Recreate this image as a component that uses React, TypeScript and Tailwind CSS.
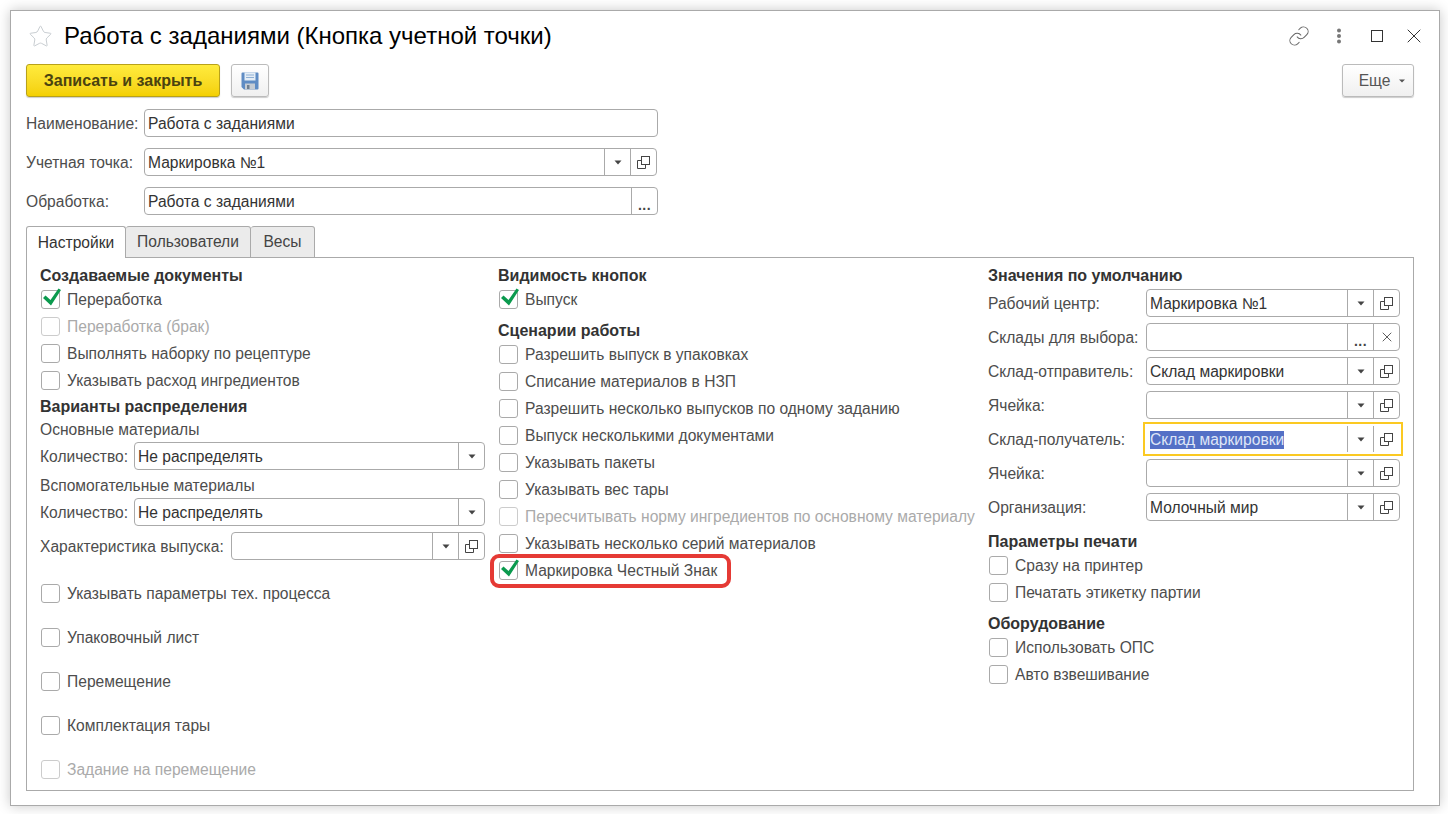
import { Link, Star, X } from "lucide-react";
import type { ReactNode } from "react";

function Caret() {
  return (
    <svg width="8" height="5" viewBox="0 0 8 5" className="text-[#444]">
      <path d="M0.5 0.5h7L4 4.5z" fill="currentColor" />
    </svg>
  );
}

function CopyIcon() {
  return (
    <svg width="13" height="13" viewBox="0 0 13 13" fill="none" stroke="#444" strokeWidth="1">
      <rect x="4.5" y="0.5" width="8" height="8" />
      <path d="M4.5 4.5H0.5v8h8V8.5" />
    </svg>
  );
}

function Cell({ children }: { children: ReactNode }) {
  return <div className="flex h-full w-[26px] shrink-0 items-center justify-center border-l border-[#aaa]">{children}</div>;
}

function Dots() {
  return <span className="mt-[8px] text-[14px] font-bold leading-none tracking-[0.5px] text-[#444]">...</span>;
}

type FieldProps = {
  value?: string;
  width: string;
  kind?: "select" | "open" | "clear" | "plain" | "pick";
  focused?: boolean;
};

function Field({ value = "", width, kind = "select", focused }: FieldProps) {
  return (
    <div
      className={`flex h-[28px] shrink-0 items-stretch border bg-white ${width} ${
        focused ? "border-transparent outline-2 outline-offset-1 outline-[#fbc922]" : "rounded-[4px] border-[#aaa]"
      }`}
    >
      <div className="flex min-w-0 flex-1 items-center pl-[3px] pt-[2px] text-[#333]">
        {focused ? <span className="bg-[#5470c6] leading-[18px] text-[#dfe6f7]">{value}</span> : value}
      </div>
      {(kind === "select" || kind === "pick") && (
        <Cell>
          <Caret />
        </Cell>
      )}
      {kind === "select" && (
        <Cell>
          <CopyIcon />
        </Cell>
      )}
      {(kind === "open" || kind === "clear") && (
        <Cell>
          <Dots />
        </Cell>
      )}
      {kind === "clear" && (
        <Cell>
          <X size={16} strokeWidth={1.3} className="text-[#444]" />
        </Cell>
      )}
    </div>
  );
}

function CheckRow({ label, checked, disabled }: { label: string; checked?: boolean; disabled?: boolean }) {
  return (
    <div className="flex h-[27px] items-center">
      <div className={`relative ml-px mr-[7px] h-[19px] w-[19px] shrink-0 rounded-[3px] border bg-white ${disabled ? "border-[#ccc]" : "border-[#aaa]"}`}>
        {checked && (
          <svg width="21" height="22" viewBox="0 0 21 22" className="absolute left-[-1px] top-[-5px]">
            <path d="M2 12 L4.5 9.5 L9.5 14 L17.5 2.5 L20 4 L10 19.5 Z" fill="#0b9a4e" />
          </svg>
        )}
      </div>
      <span className={`whitespace-nowrap ${disabled ? "text-[#aaa]" : "text-[#4d4d4d]"}`}>{label}</span>
    </div>
  );
}

function Heading({ children, className = "" }: { children: ReactNode; className?: string }) {
  return <div className={`flex items-center whitespace-nowrap text-[16px] font-bold text-[#333] ${className}`}>{children}</div>;
}

function Label({ children, className = "" }: { children: ReactNode; className?: string }) {
  return <div className={`shrink-0 whitespace-nowrap pt-[2px] text-[#4d4d4d] ${className}`}>{children}</div>;
}

function TopRow({ label, children }: { label: string; children: ReactNode }) {
  return (
    <div className="flex items-center">
      <Label className="w-[118px]">{label}</Label>
      {children}
    </div>
  );
}

function DefaultRow({ label, value, kind, focused }: { label: string; value?: string; kind?: FieldProps["kind"]; focused?: boolean }) {
  return (
    <div className="flex h-[34px] items-center">
      <Label className="w-[158px]">{label}</Label>
      <Field value={value} width="w-[254px]" kind={kind} focused={focused} />
    </div>
  );
}

function FloppyIcon() {
  return (
    <svg width="18" height="18" viewBox="0 0 18 18">
      <path d="M0.5 1.5a1 1 0 0 1 1-1h15a1 1 0 0 1 1 1v15a1 1 0 0 1-1 1H3L0.5 15z" fill="#5f8cc4" />
      <rect x="3.5" y="0.5" width="11" height="8" fill="#e4edf6" />
      <path d="M5 3h8M5 5.5h8" stroke="#8fb0d4" strokeWidth="1" />
      <rect x="4" y="11.5" width="10" height="6" fill="#c5ccd4" />
      <rect x="6" y="13" width="2.5" height="4" fill="#6f7f90" />
    </svg>
  );
}

export default function App() {
  return (
    <div className="h-[814px] w-[1448px] bg-white pl-[10px] pt-[10px] font-['Liberation_Sans',Arial,sans-serif] text-[15.6px] leading-none">
      <div className="h-[796px] w-[1430px] border border-[#aaa] bg-white pl-[15px] pr-[25px] shadow-[0_0_12px_rgba(0,0,0,0.22)]">
        <div className="flex h-[53px] items-center pb-[3px]">
          <Star size={25} strokeWidth={0.9} className="ml-[2px] text-[#c4c9ce]" />
          <h1 className="ml-[11px] whitespace-nowrap text-[24px] text-black">Работа с заданиями (Кнопка учетной точки)</h1>
          <div className="ml-auto flex items-center">
            <Link size={22} strokeWidth={1.1} className="mr-[1px] text-[#666]" />
            <svg width="6" height="16" viewBox="0 0 6 16" className="ml-[25px] mr-[2px]" fill="#777">
              <circle cx="3" cy="2.5" r="2" />
              <circle cx="3" cy="8" r="2" />
              <circle cx="3" cy="13.5" r="2" />
            </svg>
            <div className="ml-[27px] h-[12px] w-[12px] border border-[#333]" />
            <X size={24} strokeWidth={1} className="ml-[19px] mr-[-12px] text-[#333]" />
          </div>
        </div>

        <div className="flex h-[33px] items-center">
          <button className="h-full w-[194px] rounded-[3px] border border-[#b8a11a] bg-gradient-to-b from-[#ffeb3c] to-[#f4d000] text-[16px] font-bold text-[#4a4310] shadow-[0_1px_1px_rgba(0,0,0,0.2)]">
            Записать и закрыть
          </button>
          <button className="ml-[11px] flex h-full w-[38px] items-center justify-center rounded-[3px] border border-[#bbb] bg-gradient-to-b from-white to-[#f0f0f0] shadow-[0_1px_1px_rgba(0,0,0,0.2)]">
            <FloppyIcon />
          </button>
          <button className="ml-auto flex h-full w-[72px] items-center justify-center gap-[9px] rounded-[3px] border border-[#bbb] bg-gradient-to-b from-white to-[#f0f0f0] pl-[8px] text-[#555] shadow-[0_1px_1px_rgba(0,0,0,0.2)]">
            Еще
            <svg width="6" height="4" viewBox="0 0 6 4">
              <path d="M0 0.5h6L3 3.5z" fill="#555" />
            </svg>
          </button>
        </div>

        <div className="mt-[12px] flex flex-col gap-[11px]">
          <TopRow label="Наименование:">
            <Field value="Работа с заданиями" width="w-[514px]" kind="plain" />
          </TopRow>
          <TopRow label="Учетная точка:">
            <Field value="Маркировка №1" width="w-[513px]" />
          </TopRow>
          <TopRow label="Обработка:">
            <Field value="Работа с заданиями" width="w-[514px]" kind="open" />
          </TopRow>
        </div>

        <div className="relative z-10 mb-[-1px] mt-[11px] flex h-[32px] items-stretch">
          <div className="flex w-[100px] items-center justify-center rounded-t-[3px] border border-b-0 border-[#aaa] bg-white text-[#333]">Настройки</div>
          <div className="flex w-[125px] items-center justify-center rounded-t-[3px] border border-l-0 border-[#aaa] bg-[#ebebeb] text-[#444]">Пользователи</div>
          <div className="flex w-[64px] items-center justify-center rounded-t-[3px] border border-l-0 border-[#aaa] bg-[#ebebeb] text-[#444]">Весы</div>
        </div>

        <div className="flex h-[534px] border border-[#aaa] pl-[13px] pt-[8px]">
          <div className="w-[458px] shrink-0">
            <Heading className="h-[20px]">Создаваемые документы</Heading>
            <CheckRow label="Переработка" checked />
            <CheckRow label="Переработка (брак)" disabled />
            <CheckRow label="Выполнять наборку по рецептуре" />
            <CheckRow label="Указывать расход ингредиентов" />
            <Heading className="h-[24px] pt-[2px]">Варианты распределения</Heading>
            <div className="flex h-[22px] items-center pt-[2px] text-[#4d4d4d]">Основные материалы</div>
            <div className="mt-[2px] flex items-center">
              <Label className="w-[94px]">Количество:</Label>
              <Field value="Не распределять" width="w-[351px]" kind="pick" />
            </div>
            <div className="mt-[4px] flex h-[24px] items-center text-[#4d4d4d]">Вспомогательные материалы</div>
            <div className="flex items-center">
              <Label className="w-[94px]">Количество:</Label>
              <Field value="Не распределять" width="w-[351px]" kind="pick" />
            </div>
            <div className="mt-[6px] flex items-center">
              <Label className="w-[191px]">Характеристика выпуска:</Label>
              <Field width="w-[254px]" />
            </div>
            <div className="mt-[20px] flex flex-col gap-[17px]">
              <CheckRow label="Указывать параметры тех. процесса" />
              <CheckRow label="Упаковочный лист" />
              <CheckRow label="Перемещение" />
              <CheckRow label="Комплектация тары" />
              <CheckRow label="Задание на перемещение" disabled />
            </div>
          </div>

          <div className="w-[490px] shrink-0">
            <Heading className="h-[20px]">Видимость кнопок</Heading>
            <CheckRow label="Выпуск" checked />
            <Heading className="h-[28px] pt-[8px]">Сценарии работы</Heading>
            <CheckRow label="Разрешить выпуск в упаковках" />
            <CheckRow label="Списание материалов в НЗП" />
            <CheckRow label="Разрешить несколько выпусков по одному заданию" />
            <CheckRow label="Выпуск несколькими документами" />
            <CheckRow label="Указывать пакеты" />
            <CheckRow label="Указывать вес тары" />
            <CheckRow label="Пересчитывать норму ингредиентов по основному материалу" disabled />
            <CheckRow label="Указывать несколько серий материалов" />
            <div className="relative">
              <CheckRow label="Маркировка Честный Знак" checked />
              <div className="absolute left-[-8px] top-[-3px] h-[34px] w-[241px] rounded-[9px] border-[4px] border-[#e53a35]" />
            </div>
          </div>

          <div className="w-[412px] shrink-0">
            <Heading className="h-[20px]">Значения по умолчанию</Heading>
            <DefaultRow label="Рабочий центр:" value="Маркировка №1" />
            <DefaultRow label="Склады для выбора:" kind="clear" />
            <DefaultRow label="Склад-отправитель:" value="Склад маркировки" />
            <DefaultRow label="Ячейка:" />
            <DefaultRow label="Склад-получатель:" value="Склад маркировки" focused />
            <DefaultRow label="Ячейка:" />
            <DefaultRow label="Организация:" value="Молочный мир" />
            <Heading className="h-[28px] pt-[8px]">Параметры печати</Heading>
            <CheckRow label="Сразу на принтер" />
            <CheckRow label="Печатать этикетку партии" />
            <Heading className="h-[28px] pt-[8px]">Оборудование</Heading>
            <CheckRow label="Использовать ОПС" />
            <CheckRow label="Авто взвешивание" />
          </div>
        </div>
      </div>
    </div>
  );
}
